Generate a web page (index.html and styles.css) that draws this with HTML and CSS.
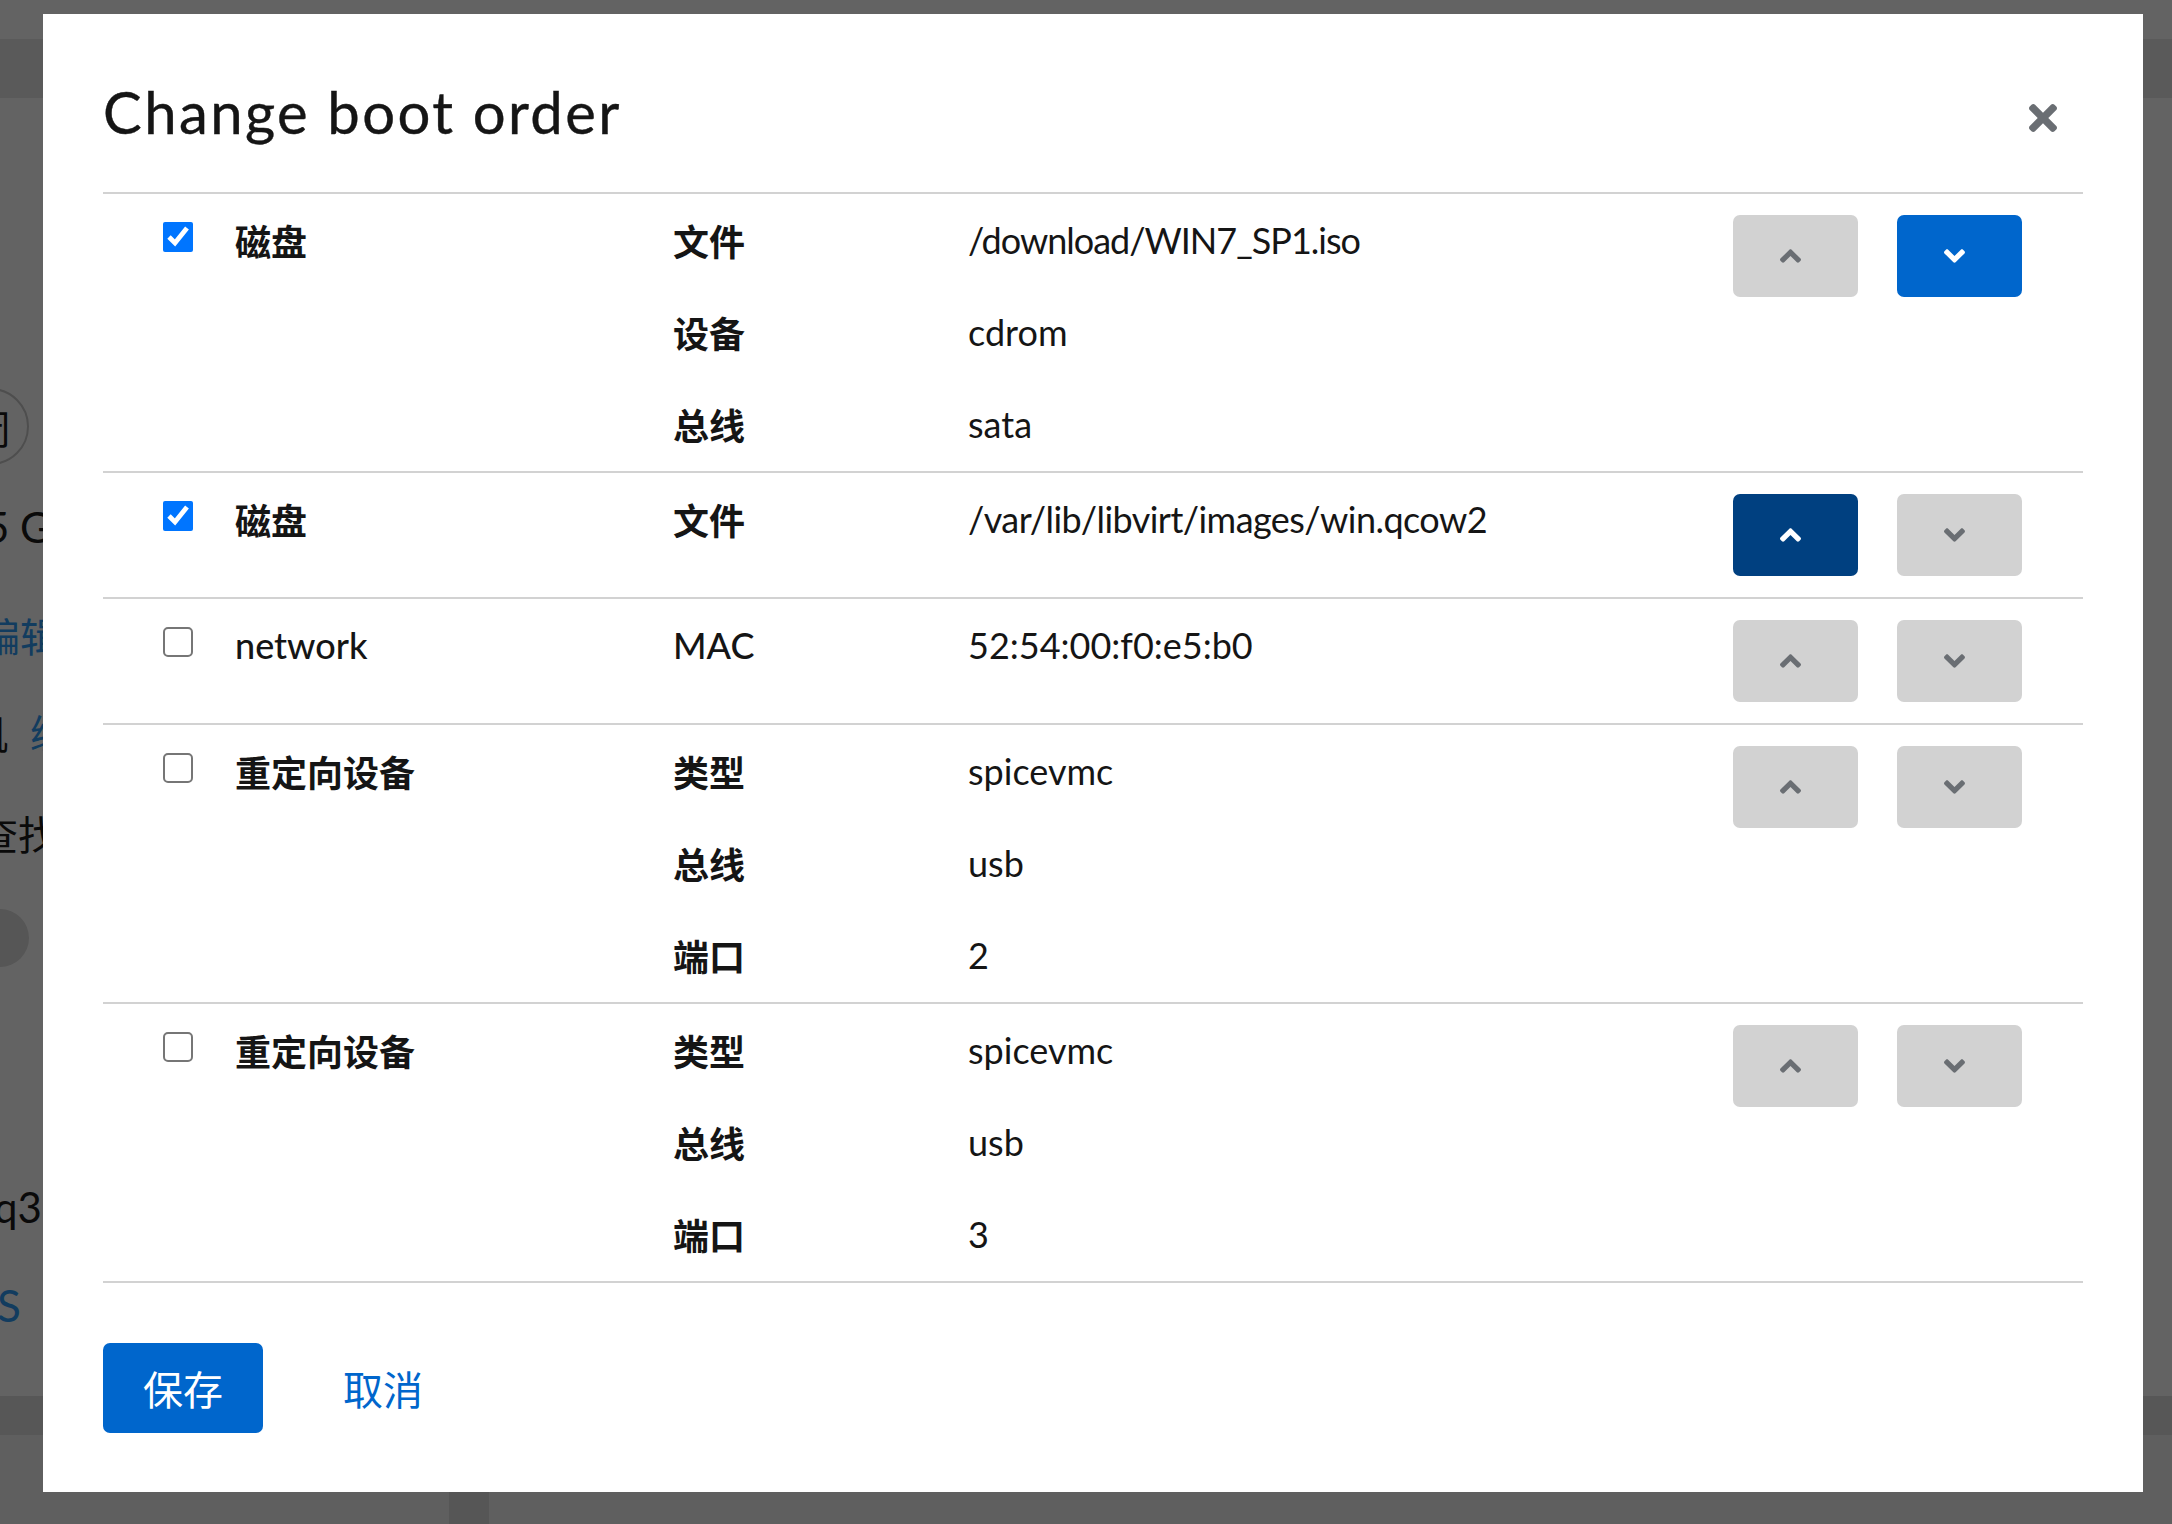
FILE: index.html
```html
<!DOCTYPE html>
<html lang="zh-CN">
<head>
<meta charset="utf-8">
<title>Change boot order</title>
<link rel="stylesheet" href="styles.css">
</head>
<body>
<div class="page">
  <div class="pg-header"></div>
  <div class="pg-body">
    <div class="pg-circle"><span>闭</span></div>
    <div class="pg-text pg-mem">5 GiB</div>
    <div class="pg-text pg-link pg-edit">编辑</div>
    <div class="pg-text pg-mach"><span>机</span><span class="pg-link pg-mach-link">编</span></div>
    <div class="pg-text pg-find">查找</div>
    <div class="pg-toggle"></div>
    <div class="pg-text pg-q35">q35</div>
    <div class="pg-text pg-link pg-s">S</div>
    <div class="pg-band"></div>
    <div class="pg-foot"><div class="pg-foot-bar"></div></div>
  </div>
</div>

<div class="backdrop">
  <div class="modal" role="dialog" aria-labelledby="modal-title">
    <header class="modal-header">
      <h1 class="modal-title" id="modal-title">Change boot order</h1>
      <button class="close-btn" aria-label="Close">
        <svg class="close-icon" viewBox="0 80 352 352" aria-hidden="true"><path d="M242.72 256l100.07-100.07c12.28-12.28 12.28-32.19 0-44.48l-22.24-22.24c-12.28-12.28-32.19-12.28-44.48 0L176 189.28 75.93 89.21c-12.28-12.28-32.19-12.28-44.48 0L9.21 111.45c-12.28 12.28-12.28 32.19 0 44.48L109.28 256 9.21 356.07c-12.28 12.28-12.28 32.19 0 44.48l22.24 22.24c12.28 12.28 32.2 12.28 44.48 0L176 322.72l100.07 100.07c12.28 12.28 32.2 12.28 44.48 0l22.24-22.24c12.28-12.28 12.28-32.19 0-44.48L242.72 256z"/></svg>
      </button>
    </header>

    <ul class="boot-list">
      <li class="boot-row">
        <span class="check-cell"><input type="checkbox" checked aria-label="磁盘"></span>
        <span class="dev-name zh">磁盘</span>
        <dl class="props">
          <dt class="zh">文件</dt><dd class="path-caps">/download/WIN7_SP1.iso</dd>
          <dt class="zh">设备</dt><dd>cdrom</dd>
          <dt class="zh">总线</dt><dd>sata</dd>
        </dl>
        <div class="moves">
          <button class="mv" aria-label="Move up"><svg class="chev" viewBox="0 150 320 212"><path d="M177 159.7l136 136c9.4 9.4 9.4 24.6 0 33.9l-22.6 22.6c-9.4 9.4-24.6 9.4-33.9 0L160 255.9l-96.4 96.4c-9.4 9.4-24.6 9.4-33.9 0L7 329.7c-9.4-9.4-9.4-24.6 0-33.9l136-136c9.4-9.5 24.6-9.5 34-.1z"/></svg></button>
          <button class="mv mv-primary" aria-label="Move down"><svg class="chev" viewBox="0 150 320 212"><path d="M143 352.3L7 216.3c-9.4-9.4-9.4-24.6 0-33.9l22.6-22.6c9.4-9.4 24.6-9.4 33.9 0l96.4 96.4 96.4-96.4c9.4-9.4 24.6-9.4 33.9 0l22.6 22.6c9.4 9.4 9.4 24.6 0 33.9l-136 136c-9.2 9.4-24.4 9.4-33.8 0z"/></svg></button>
        </div>
      </li>

      <li class="boot-row">
        <span class="check-cell"><input type="checkbox" checked aria-label="磁盘"></span>
        <span class="dev-name zh">磁盘</span>
        <dl class="props">
          <dt class="zh">文件</dt><dd class="path">/var/lib/libvirt/images/win.qcow2</dd>
        </dl>
        <div class="moves">
          <button class="mv mv-hover" aria-label="Move up"><svg class="chev" viewBox="0 150 320 212"><path d="M177 159.7l136 136c9.4 9.4 9.4 24.6 0 33.9l-22.6 22.6c-9.4 9.4-24.6 9.4-33.9 0L160 255.9l-96.4 96.4c-9.4 9.4-24.6 9.4-33.9 0L7 329.7c-9.4-9.4-9.4-24.6 0-33.9l136-136c9.4-9.5 24.6-9.5 34-.1z"/></svg></button>
          <button class="mv" aria-label="Move down"><svg class="chev" viewBox="0 150 320 212"><path d="M143 352.3L7 216.3c-9.4-9.4-9.4-24.6 0-33.9l22.6-22.6c9.4-9.4 24.6-9.4 33.9 0l96.4 96.4 96.4-96.4c9.4-9.4 24.6-9.4 33.9 0l22.6 22.6c9.4 9.4 9.4 24.6 0 33.9l-136 136c-9.2 9.4-24.4 9.4-33.8 0z"/></svg></button>
        </div>
      </li>

      <li class="boot-row">
        <span class="check-cell"><input type="checkbox" aria-label="network"></span>
        <span class="dev-name">network</span>
        <dl class="props">
          <dt>MAC</dt><dd>52:54:00:f0:e5:b0</dd>
        </dl>
        <div class="moves">
          <button class="mv" aria-label="Move up"><svg class="chev" viewBox="0 150 320 212"><path d="M177 159.7l136 136c9.4 9.4 9.4 24.6 0 33.9l-22.6 22.6c-9.4 9.4-24.6 9.4-33.9 0L160 255.9l-96.4 96.4c-9.4 9.4-24.6 9.4-33.9 0L7 329.7c-9.4-9.4-9.4-24.6 0-33.9l136-136c9.4-9.5 24.6-9.5 34-.1z"/></svg></button>
          <button class="mv" aria-label="Move down"><svg class="chev" viewBox="0 150 320 212"><path d="M143 352.3L7 216.3c-9.4-9.4-9.4-24.6 0-33.9l22.6-22.6c9.4-9.4 24.6-9.4 33.9 0l96.4 96.4 96.4-96.4c9.4-9.4 24.6-9.4 33.9 0l22.6 22.6c9.4 9.4 9.4 24.6 0 33.9l-136 136c-9.2 9.4-24.4 9.4-33.8 0z"/></svg></button>
        </div>
      </li>

      <li class="boot-row">
        <span class="check-cell"><input type="checkbox" aria-label="重定向设备"></span>
        <span class="dev-name zh">重定向设备</span>
        <dl class="props">
          <dt class="zh">类型</dt><dd>spicevmc</dd>
          <dt class="zh">总线</dt><dd>usb</dd>
          <dt class="zh">端口</dt><dd>2</dd>
        </dl>
        <div class="moves">
          <button class="mv" aria-label="Move up"><svg class="chev" viewBox="0 150 320 212"><path d="M177 159.7l136 136c9.4 9.4 9.4 24.6 0 33.9l-22.6 22.6c-9.4 9.4-24.6 9.4-33.9 0L160 255.9l-96.4 96.4c-9.4 9.4-24.6 9.4-33.9 0L7 329.7c-9.4-9.4-9.4-24.6 0-33.9l136-136c9.4-9.5 24.6-9.5 34-.1z"/></svg></button>
          <button class="mv" aria-label="Move down"><svg class="chev" viewBox="0 150 320 212"><path d="M143 352.3L7 216.3c-9.4-9.4-9.4-24.6 0-33.9l22.6-22.6c9.4-9.4 24.6-9.4 33.9 0l96.4 96.4 96.4-96.4c9.4-9.4 24.6-9.4 33.9 0l22.6 22.6c9.4 9.4 9.4 24.6 0 33.9l-136 136c-9.2 9.4-24.4 9.4-33.8 0z"/></svg></button>
        </div>
      </li>

      <li class="boot-row">
        <span class="check-cell"><input type="checkbox" aria-label="重定向设备"></span>
        <span class="dev-name zh">重定向设备</span>
        <dl class="props">
          <dt class="zh">类型</dt><dd>spicevmc</dd>
          <dt class="zh">总线</dt><dd>usb</dd>
          <dt class="zh">端口</dt><dd>3</dd>
        </dl>
        <div class="moves">
          <button class="mv" aria-label="Move up"><svg class="chev" viewBox="0 150 320 212"><path d="M177 159.7l136 136c9.4 9.4 9.4 24.6 0 33.9l-22.6 22.6c-9.4 9.4-24.6 9.4-33.9 0L160 255.9l-96.4 96.4c-9.4 9.4-24.6 9.4-33.9 0L7 329.7c-9.4-9.4-9.4-24.6 0-33.9l136-136c9.4-9.5 24.6-9.5 34-.1z"/></svg></button>
          <button class="mv" aria-label="Move down"><svg class="chev" viewBox="0 150 320 212"><path d="M143 352.3L7 216.3c-9.4-9.4-9.4-24.6 0-33.9l22.6-22.6c9.4-9.4 24.6-9.4 33.9 0l96.4 96.4 96.4-96.4c9.4-9.4 24.6-9.4 33.9 0l22.6 22.6c9.4 9.4 9.4 24.6 0 33.9l-136 136c-9.2 9.4-24.4 9.4-33.8 0z"/></svg></button>
        </div>
      </li>
    </ul>

    <footer class="modal-footer">
      <button class="btn-primary">保存</button>
      <button class="btn-link">取消</button>
    </footer>
  </div>
</div>
</body>
</html>
```

FILE: styles.css
```css
html, body {
  margin: 0;
  padding: 0;
  height: 100%;
  overflow: hidden;
}

body {
  font-family: "Lato", "Noto Sans CJK SC", sans-serif;
  color: #151515;
  background: #ffffff;
}

/* ---------- underlying page (dimmed by the backdrop) ---------- */
.page {
  height: 1524px;
  background: #ffffff;
  display: flex;
  flex-direction: column;
}

.pg-header {
  margin-top: 39px;
  height: 59px;
  background: #e8e8e8;
  flex: none;
}

.pg-body {
  display: flex;
  flex-direction: column;
  align-items: flex-start;
  flex: 1;
  font-size: 40px;
}

.pg-circle {
  margin-top: 290px;
  margin-left: -48px;
  width: 73px;
  height: 73px;
  border: 2px solid #c7c7c7;
  border-radius: 50%;
  display: flex;
  align-items: center;
  justify-content: center;
  font-family: "Noto Sans CJK SC", sans-serif;
  font-size: 40px;
  color: #151515;
}

.pg-text {
  line-height: 46px;
  white-space: nowrap;
  color: #151515;
  font-family: "Lato", "Noto Sans CJK SC", sans-serif;
}

.pg-link { color: #2b9af3; }

.pg-mem { margin-top: 39px; margin-left: -15px; font-size: 42px; }
.pg-edit { margin-top: 64px; margin-left: -20px; }
.pg-mach { margin-top: 51px; margin-left: -32px; }
.pg-mach-link { margin-left: 22px; }
.pg-find { margin-top: 55px; margin-left: -22px; }

.pg-toggle {
  margin-top: 51px;
  margin-left: -29px;
  width: 58px;
  height: 58px;
  border-radius: 50%;
  background: #dcdcdc;
}

.pg-q35 { margin-top: 217px; margin-left: -6px; font-size: 42px; }
.pg-s { margin-top: 52px; margin-left: -3px; font-size: 44px; }

.pg-band {
  margin-top: 68px;
  align-self: stretch;
  height: 39px;
  background: #e0e0e0;
}

.pg-foot {
  align-self: stretch;
  flex: 1;
  background: #f4f4f4;
}

.pg-foot-bar {
  margin-left: 449px;
  width: 40px;
  height: 100%;
  background: #dedede;
}

/* ---------- backdrop + modal ---------- */
.backdrop {
  position: fixed;
  inset: 0;
  background: rgba(3, 3, 3, 0.62);
  padding: 14px 29px 0 43px;
  box-sizing: border-box;
  display: flex;
  align-items: flex-start;
}

.modal {
  width: 2100px;
  background: #ffffff;
  padding: 0 60px;
  box-sizing: border-box;
}

.modal-header {
  display: flex;
  justify-content: space-between;
  align-items: flex-start;
  padding: 63px 0 45px;
  border-bottom: 2px solid #d2d2d2;
}

.modal-title {
  margin: 0;
  font-family: "Lato", sans-serif;
  font-weight: 400;
  font-size: 58px;
  letter-spacing: 2.4px;
  line-height: 70px;
  color: #151515;
  -webkit-text-stroke: 0.4px #151515;
}

.close-btn {
  margin-top: 12px;
  width: 80px;
  height: 58px;
  padding: 0;
  border: 0;
  background: transparent;
  display: flex;
  align-items: center;
  justify-content: center;
}

.close-icon {
  width: 28px;
  height: 28px;
  fill: #6a6e73;
}

/* ---------- rows ---------- */
.boot-list {
  list-style: none;
  margin: 0;
  padding: 0;
}

.boot-row {
  display: grid;
  grid-template-columns: 72px 438px 1fr auto;
  align-items: start;
  padding: 20px 61px 21px 60px;
  border-bottom: 2px solid #d2d2d2;
  font-size: 36px;
  line-height: 52px;
}

.check-cell {
  display: flex;
  padding-top: 8px;
}

.check-cell input {
  width: 30px;
  height: 30px;
  margin: 0;
}

.check-cell input:not(:checked) {
  -webkit-appearance: none;
  appearance: none;
  box-sizing: border-box;
  border: 2.5px solid #767676;
  border-radius: 5px;
  background: #ffffff;
}

.dev-name {
  font-weight: 500;
  white-space: nowrap;
}

.zh {
  font-family: "Noto Sans CJK SC", sans-serif;
  font-weight: 700;
}

.props {
  margin: 0;
  display: grid;
  grid-template-columns: 295px 1fr;
  row-gap: 40px;
}

.props dt {
  margin: 0;
  font-weight: 500;
}

.props dt.zh { font-weight: 700; }

.props dd {
  margin: 0;
  font-weight: 400;
  white-space: nowrap;
}

.props dd.path { letter-spacing: -0.55px; }
.props dd.path-caps { letter-spacing: -1px; }

.moves {
  display: flex;
  gap: 39px;
  margin-top: 1px;
}

.mv {
  width: 125px;
  height: 82px;
  border: 0;
  border-radius: 7px;
  background: #d2d2d2;
  padding: 0 10px 0 0;
  display: flex;
  align-items: center;
  justify-content: center;
}

.mv .chev {
  width: 21px;
  height: 14px;
  fill: #6a6e73;
}

.mv-primary { background: #0066cc; }
.mv-hover { background: #004080; }
.mv-primary .chev,
.mv-hover .chev { fill: #ffffff; }

/* ---------- footer ---------- */
.modal-footer {
  display: flex;
  align-items: center;
  padding: 60px 0 59px;
}

.btn-primary {
  height: 90px;
  padding: 0 40px;
  border: 0;
  border-radius: 7px;
  background: #0066cc;
  color: #ffffff;
  font-family: "Noto Sans CJK SC", sans-serif;
  font-size: 40px;
  font-weight: 400;
}

.btn-link {
  margin-left: 80px;
  height: 90px;
  padding: 0;
  border: 0;
  background: transparent;
  color: #0066cc;
  font-family: "Noto Sans CJK SC", sans-serif;
  font-size: 40px;
  font-weight: 400;
}
```
